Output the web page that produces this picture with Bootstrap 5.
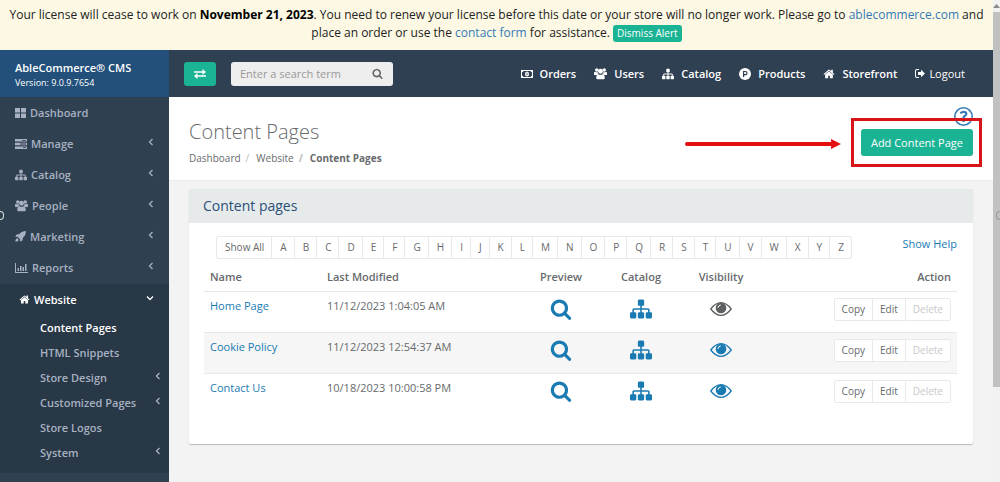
<!DOCTYPE html>
<html lang="en">
<head>
<meta charset="utf-8">
<meta name="viewport" content="width=device-width, initial-scale=1">
<title>Content Pages</title>
<link href="https://cdn.jsdelivr.net/npm/bootstrap@5.3.0/dist/css/bootstrap.min.css" rel="stylesheet">
<style>
body{font-family:"Open Sans",sans-serif;font-size:11px;line-height:16px;color:#676a6c;background:#f3f3f4}
a{text-decoration:none;color:#1a7bb3}
svg{display:block;fill:currentColor;flex:none}
.license{background:#fcf8e3;color:#222;font-size:12px;line-height:18px;min-height:50px;padding-top:6px}
.license strong{color:#000}
.license a{color:#337ab7}
.teal{background:#1ab394;color:#fff;border:0;border-radius:3px}
.teal:hover{background:#18a689;color:#fff}
.dismiss{font-size:10px;line-height:17px;padding:0 4px}
.side{width:169px;background:#2f4050;flex:none}
.brand{background:#22507a;color:#fff;height:47px;padding:10px 15px 0}
.brand small{font-size:9px;line-height:14px}
.side a{color:#a7b1c2;font-weight:600;height:31px;padding:0 15px;display:flex;align-items:center;gap:4px}
.side .go{margin-left:auto;fill:none;stroke:currentColor;stroke-width:1.3;position:relative;top:-2px}
.side .open{background:#293846;margin-top:1px}
.side .open .on{color:#fff}
.side .top{padding-left:19px}
.side .sub a{height:25px;padding:0 8px 0 40px}
.bar{background:#2f4053;height:47px;padding:0 28px 0 15px}
.swap{width:32px;height:24px}
.find{width:162px;height:24px;background:#eee;border-radius:3px;padding:0 10px 0 9px;margin-left:15px}
.find input{font-size:11px;border:0;background:none;width:100%;min-width:0;outline:0;padding:0;color:#555}
.find input::placeholder{color:#999}
.find button{border:0;background:none;padding:0;color:#666}
.bar nav{gap:18px}
.bar nav a{color:#fff;font-weight:600;display:flex;align-items:center;gap:7px}
.head{background:#fff;border-bottom:1px solid #e7eaec;min-height:84px;padding:10px 20px 0}
.head h1{font-size:20px;font-weight:300;line-height:24px;margin:13px 0 6px}
.crumbs{font-size:10px;line-height:16px}
.crumbs a{color:#676a6c}
.crumbs .breadcrumb-item+.breadcrumb-item{padding-left:5px}
.crumbs .breadcrumb-item+.breadcrumb-item::before{color:#bbb;padding-right:7px}
.help{color:#337ab7}
.add{line-height:17px;padding:5px 10px}
.lift{margin-top:3px}
.callout{position:absolute;inset:-11px -9px -11px -10px;border:3px solid #d91418;pointer-events:none}
.arrow{position:absolute;right:calc(100% + 20px);top:10px;color:#e3100f}
.panel{background:#fff;border-radius:2px;box-shadow:0 1px 1px #bbb;margin:8px 20px 37px;padding-bottom:29px}
.panel h2{background:#e6eaeb;color:#2b5078;font-size:14px;font-weight:400;line-height:18px;padding:8px 14px;margin:0}
.inner{padding:13px 16px 0 15px}
.mini .btn{font-size:10px;line-height:15px;padding:3px 7px;border:1px solid #e7eaec;border-radius:0;color:#676a6c;background:#fff}
.mini .btn:disabled{color:#c8c8c8;opacity:1}
.mini .btn:first-child{border-radius:2px 0 0 2px}
.mini .btn:last-child{border-radius:0 2px 2px 0}
.alpha{margin-left:12px}
.alpha .btn{padding:3px 7px 3px 8px}
.pages{table-layout:fixed;color:#676a6c;margin:0}
.pages>:not(caption)>*>*{padding:6px;border-color:#e7e7e7;color:#676a6c}
.pages thead th{font-weight:600;padding:10px 6px 6px}
.pages tbody td{height:41px;border-width:1px 0 0}
.pages tbody tr:nth-child(even) td{background:#f6f6f6}
.c-name{width:117px}.c-date{width:200px}.c-ico{width:80px}
.pages svg{margin:auto}
.pages .hid{color:#5c5e60}
.track{width:7px;flex:none;background:#f1f1f1;padding-top:12px}
.thumb{height:375px;background:#c1c1c1}
.track svg{color:#888;position:absolute;top:4px}
.grip{position:absolute;top:211px;width:4px;height:9px;border:1px solid #999}
.grip-l{left:0;border-left:0;border-radius:0 5px 5px 0;border-color:#ddd}
.grip-r{right:0;border-right:0;border-radius:5px 0 0 5px}
</style>
</head>
<body>
<svg class="d-none" aria-hidden="true">
<symbol id="search" viewBox="0 0 1792 1792"><path d="M1216 832q0-185-131.500-316.500t-316.500-131.500-316.500 131.500-131.500 316.500 131.500 316.500 316.500 131.500 316.500-131.500 131.500-316.500zm512 832q0 52-38 90t-90 38q-54 0-90-38l-343-342q-179 124-399 124-143 0-273.500-55.500t-225-150-150-225-55.500-273.500 55.500-273.500 150-225 225-150 273.500-55.500 273.500 55.500 225 150 150 225 55.500 273.500q0 220-124 399l343 343q37 37 37 90z"/></symbol>
<symbol id="sitemap" viewBox="0 0 1792 1792"><path d="M1792 1248v320q0 40-28 68t-68 28h-320q-40 0-68-28t-28-68v-320q0-40 28-68t68-28h96v-192h-512v192h96q40 0 68 28t28 68v320q0 40-28 68t-68 28h-320q-40 0-68-28t-28-68v-320q0-40 28-68t68-28h96v-192h-512v192h96q40 0 68 28t28 68v320q0 40-28 68t-68 28h-320q-40 0-68-28t-28-68v-320q0-40 28-68t68-28h96v-192q0-52 38-90t90-38h512v-192h-96q-40 0-68-28t-28-68v-320q0-40 28-68t68-28h320q40 0 68 28t28 68v320q0 40-28 68t-68 28h-96v192h512q52 0 90 38t38 90v192h96q40 0 68 28t28 68z"/></symbol>
<symbol id="home" viewBox="0 0 1792 1792"><path d="M1472 992v480q0 26-19 45t-45 19h-384v-384h-256v384h-384q-26 0-45-19t-19-45v-480q0-1 .5-3t.5-3l575-474 575 474q1 2 1 6zm223-69l-62 74q-8 9-21 11h-3q-13 0-21-7l-692-577-692 577q-12 8-24 7-13-2-21-11l-62-74q-8-10-7-23.500t11-21.500l719-599q32-26 76-26t76 26l244 204v-195q0-14 9-23t23-9h192q14 0 23 9t9 23v408l219 182q10 8 11 21.500t-7 23.500z"/></symbol>
<symbol id="users" viewBox="0 0 14 14"><circle cx="3" cy="3.200" r="1.900"/><circle cx="11" cy="3.200" r="1.900"/><circle cx="7" cy="4.600" r="2.600"/><path d="M0 8V6.500Q0 5 1.100 5q1.900.9 2.700.5Q4 7 5 7.600 3.500 7.700 2.900 8.700H1Q0 8.700 0 8zM14 8V6.500Q14 5 12.900 5q-1.900.9-2.700.5Q10 7 9 7.600q1.500.1 2.100 1.100H13Q14 8.700 14 8zM2.400 11.800Q2.400 7.700 4.600 7.700q2.400 1.500 4.800 0 2.200 0 2.200 4.100 0 1.400-1.500 1.400H3.900q-1.500 0-1.500-1.400z"/></symbol>
<symbol id="chev" viewBox="0 0 6 8"><path d="M4.500 1 1.500 4l3 3"/></symbol>
<symbol id="eye" viewBox="0 0 22 16"><path fill="none" stroke="currentColor" stroke-width="1.300" d="M.8 8Q5.500 1.700 11 1.700T21.200 8Q16.500 14.300 11 14.300T.8 8z"/><circle cx="11" cy="7" r="5.300"/><path fill="none" stroke="#fff" stroke-width="1" stroke-linecap="round" d="M8 6.500Q8.300 4.300 10.400 4"/></symbol>
</svg>
<div class="d-flex min-vh-100">
<div class="flex-grow-1 d-flex flex-column" style="min-width:0">
  <div class="license text-center px-1">Your license will cease to work on <strong>November 21, 2023</strong>. You need to renew your license before this date or your store will no longer work. Please go to <a href="#">ablecommerce.com</a> and place an order or use the <a href="#">contact form</a> for assistance. <button type="button" class="teal dismiss">Dismiss Alert</button></div>
  <div class="d-flex flex-grow-1">
    <aside class="side">
      <div class="brand"><div class="fw-semibold">AbleCommerce® CMS</div><small class="d-block">Version: 9.0.9.7654</small></div>
      <nav aria-label="Main">
        <a href="#"><svg width="11" height="10" viewBox="0 0 11 10"><path d="M0 0h5v4.500H0zM6 0h5v4.500H6zM0 5.500h5V10H0zM6 5.500h5V10H6z"/></svg>Dashboard</a>
        <a href="#"><svg width="12" height="10" viewBox="0 0 12 10"><path fill-rule="evenodd" d="M0 0h12v2.600H0zM0 3.700h12v2.600H0zM0 7.400h12V10H0zM7 .9v.8h4V.9zM5 4.600v.8h6v-.8zM8 8.300v.8h3v-.8z"/></svg>Manage<svg class="go" width="6" height="8"><use href="#chev"/></svg></a>
        <a href="#"><svg width="12" height="12"><use href="#sitemap"/></svg>Catalog<svg class="go" width="6" height="8"><use href="#chev"/></svg></a>
        <a href="#"><svg width="13" height="13"><use href="#users"/></svg>People<svg class="go" width="6" height="8"><use href="#chev"/></svg></a>
        <a href="#"><svg width="11" height="11" viewBox="0 0 12 12"><path d="M12 0Q7 .2 4.700 3.500L2 3.600.3 6.500l2.500-.2 2.900 2.900-.2 2.500 2.900-1.700.1-2.700Q11.800 5 12 0zM2.300 7.700Q.6 8.400.3 11.700 3.600 11.400 4.300 9.700z"/></svg>Marketing<svg class="go" width="6" height="8"><use href="#chev"/></svg></a>
        <a href="#"><svg width="13" height="10" viewBox="0 0 13 10"><path d="M0 0h1v9h12v1H0zM2.500 5h1.500v3H2.500zM5 3h1.500v5H5zM7.500 4h1.500v4H7.500zM10 1h1.500v7H10z"/></svg>Reports<svg class="go" width="6" height="8"><use href="#chev"/></svg></a>
        <div class="open pb-2">
          <a href="#" class="top on"><svg width="11" height="11"><use href="#home"/></svg>Website<svg class="go" width="8" height="6" viewBox="0 0 8 6"><path d="m1 1.500 3 3 3-3"/></svg></a>
          <div class="sub">
            <a href="#" class="on">Content Pages</a>
            <a href="#">HTML Snippets</a>
            <a href="#">Store Design<svg class="go" width="6" height="8"><use href="#chev"/></svg></a>
            <a href="#">Customized Pages<svg class="go" width="6" height="8"><use href="#chev"/></svg></a>
            <a href="#">Store Logos</a>
            <a href="#">System<svg class="go" width="6" height="8"><use href="#chev"/></svg></a>
          </div>
        </div>
      </nav>
    </aside>
    <div class="flex-grow-1" style="min-width:0">
      <header class="bar d-flex align-items-center">
        <button type="button" class="teal swap d-flex align-items-center justify-content-center p-0" aria-label="Toggle menu"><svg width="12" height="10" viewBox="0 0 12 10"><path d="M0 2.200h8.500V0L12 3 8.500 6V3.800H0zM12 6.200H3.500V4L0 7l3.500 3V7.800H12z"/></svg></button>
        <form class="find d-flex align-items-center">
          <input type="text" placeholder="Enter a search term" aria-label="Search term">
          <button type="button" aria-label="Search"><svg width="11" height="11"><use href="#search"/></svg></button>
        </form>
        <nav class="d-flex ms-auto" aria-label="Quick links">
          <a href="#"><svg width="12" height="8" viewBox="0 0 12 8"><path fill-rule="evenodd" d="M0 0h12v8H0zM2.300 1Q2.300 2.300 1 2.300v3.400q1.300 0 1.300 1.300h7.400q0-1.300 1.300-1.300V2.300Q9.700 2.300 9.700 1z"/><ellipse cx="6" cy="4" rx="2" ry="2.500"/><path fill="#2f4053" d="M5.600 2.800h.8v2.500h-.8z"/></svg>Orders</a>
          <a href="#"><svg width="13" height="13"><use href="#users"/></svg>Users</a>
          <a href="#"><svg width="12" height="12"><use href="#sitemap"/></svg>Catalog</a>
          <a href="#"><svg width="12" height="12" viewBox="0 0 12 12"><circle cx="6" cy="6" r="6"/><path fill="none" stroke="#2f4053" stroke-width="1.200" d="M4.600 9V3.500h1.800a1.500 1.500 0 0 1 0 3.200H4.600"/></svg>Products</a>
          <a href="#"><svg width="12" height="12"><use href="#home"/></svg>Storefront</a>
          <a href="#" class="fw-normal gap-1"><svg width="10" height="9" viewBox="0 0 10 9"><path d="M4 0v1H2Q1 1 1 2v5q0 1 1 1h2v1H1.800Q0 9 0 7.200V1.800Q0 0 1.800 0zM3 3h3V.8l4 3.700-4 3.700V6H3z"/></svg>Logout</a>
        </nav>
      </header>
      <div class="head d-flex justify-content-between">
        <div>
          <h1>Content Pages</h1>
          <ol class="breadcrumb crumbs mb-0">
            <li class="breadcrumb-item"><a href="#">Dashboard</a></li>
            <li class="breadcrumb-item"><a href="#">Website</a></li>
            <li class="breadcrumb-item fw-bold">Content Pages</li>
          </ol>
        </div>
        <div class="d-flex flex-column align-items-end">
          <a href="#" class="help" aria-label="Help"><svg width="19" height="19" viewBox="0 0 19 19" fill="none"><circle cx="9.500" cy="9.500" r="8.700" fill="none" stroke="currentColor" stroke-width="1.500"/><path fill="none" stroke="currentColor" stroke-width="2.200" d="M6.300 6.200Q9.300 4 11.600 5.400q1.700 1.700-.6 3.300-1.700 1-1.500 2.500M9.500 12.700v2.300"/></svg></a>
          <div class="position-relative lift">
            <button type="button" class="teal add">Add Content Page</button>
            <div class="callout"></div>
            <svg class="arrow" width="156" height="10" viewBox="0 0 156 10"><path d="M2 3h144V0l10 5-10 5V7H2a2 2 0 0 1 0-4z"/></svg>
          </div>
        </div>
      </div>
      <section class="panel">
        <h2>Content pages</h2>
        <div class="inner">
          <div class="d-flex justify-content-between">
            <div class="btn-group mini alpha" id="letters"><button type="button" class="btn">Show All</button></div>
            <a href="#">Show Help</a>
          </div>
          <table class="table pages">
            <colgroup><col class="c-name"><col class="c-date"><col class="c-ico"><col class="c-ico"><col class="c-ico"><col></colgroup>
            <thead><tr><th>Name</th><th>Last Modified</th><th class="text-center">Preview</th><th class="text-center">Catalog</th><th class="text-center">Visibility</th><th class="text-end">Action</th></tr></thead>
            <tbody id="rows"></tbody>
          </table>
        </div>
      </section>
    </div>
  </div>
</div>
<div class="track"><svg width="7" height="4" viewBox="0 0 7 4"><path d="M3.500 0 7 4H0z"/></svg><div class="thumb"></div></div>
</div>
<div class="grip grip-l"></div><div class="grip grip-r"></div>
<script>
const letters = document.getElementById('letters');
for (const c of 'ABCDEFGHIJKLMNOPQRSTUVWXYZ')
  letters.insertAdjacentHTML('beforeend', `<button type="button" class="btn">${c}</button>`);
const pages = [
  ['Home Page', '11/12/2023 1:04:05 AM', false],
  ['Cookie Policy', '11/12/2023 12:54:37 AM', true],
  ['Contact Us', '10/18/2023 10:00:58 PM', true]
];
document.getElementById('rows').innerHTML = pages.map(([name, date, visible]) => `<tr>
  <td><a href="#">${name}</a></td><td>${date}</td>
  <td><a href="#" aria-label="Preview"><svg width="22" height="22"><use href="#search"/></svg></a></td>
  <td><a href="#" aria-label="Catalog"><svg width="22" height="22"><use href="#sitemap"/></svg></a></td>
  <td><a href="#" aria-label="Visibility" class="${visible ? '' : 'hid'}"><svg width="22" height="22"><use href="#eye"/></svg></a></td>
  <td class="text-end"><div class="btn-group mini"><button type="button" class="btn">Copy</button><button type="button" class="btn">Edit</button><button type="button" class="btn" disabled>Delete</button></div></td></tr>`).join('');
</script>
<script src="https://cdn.jsdelivr.net/npm/bootstrap@5.3.0/dist/js/bootstrap.bundle.min.js"></script>
</body>
</html>
